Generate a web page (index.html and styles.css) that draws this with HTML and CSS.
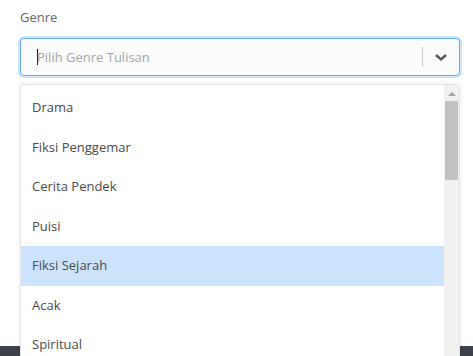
FILE: index.html
```html
<!DOCTYPE html>
<html lang="en">
<head>
  <meta charset="UTF-8">
  <meta name="viewport" content="width=device-width, initial-scale=1.0">
  <title>Genre</title>
  <link rel="stylesheet" href="styles.css">
</head>
<body>
  <main class="content">
    <div class="field">
      <label class="field-label">Genre</label>
      <div class="select">
        <div class="select-control">
          <div class="select-value">
            <span class="caret"></span>
            <span class="placeholder">Pilih Genre Tulisan</span>
          </div>
          <div class="select-indicators">
            <span class="separator"></span>
            <span class="chevron">
              <svg width="14" height="9" viewBox="0 0 14 9"><path d="M2 2 L7 6.5 L12 2" fill="none" stroke="#555" stroke-width="2.4"/></svg>
            </span>
          </div>
        </div>

        <div class="select-menu">
          <ul class="menu-list">
            <li>Drama</li>
            <li>Fiksi Penggemar</li>
            <li>Cerita Pendek</li>
            <li>Puisi</li>
            <li class="focused">Fiksi Sejarah</li>
            <li>Acak</li>
            <li>Spiritual</li>
          </ul>
          <div class="scrollbar">
            <span class="scroll-arrow"></span>
            <span class="scroll-thumb"></span>
          </div>
        </div>
      </div>
    </div>
  </main>
  <footer class="footer"></footer>
</body>
</html>
```

FILE: styles.css
```css
body, html {
  margin: 0;
  padding: 0;
  height: 100%;
  overflow: hidden;
  font-family: "Open Sans", Arial, sans-serif;
  background-color: #fff;
}

body {
  display: flex;
  flex-direction: column;
}

.content {
  height: 346px;
  flex-shrink: 0;
}

.footer {
  flex: 1;
  background-color: #3e434b;
}

.field {
  padding: 7px 13px 0 20px;
}

.field-label {
  display: block;
  font-size: 13px;
  line-height: 20px;
  color: #666;
  margin-bottom: 11px;
}

.select {
  position: relative;
}

.select-control {
  display: flex;
  align-items: center;
  height: 38px;
  box-sizing: border-box;
  background-color: #fafbfb;
  border: 1px solid #66aaf0;
  border-radius: 4px;
  box-shadow: 0 0 0 2px rgba(120, 180, 245, 0.35);
}

.select-value {
  flex: 1;
  display: flex;
  align-items: center;
  padding-left: 16px;
}

.caret {
  display: inline-block;
  width: 1px;
  height: 16px;
  background-color: #222;
  margin-right: -1px;
}

.placeholder {
  font-size: 13px;
  color: #a6a6a6;
}

.select-indicators {
  display: flex;
  align-items: center;
}

.separator {
  width: 1px;
  height: 20px;
  background-color: #ccc;
}

.chevron {
  display: flex;
  justify-content: center;
  align-items: center;
  width: 36px;
}

.select-menu {
  position: absolute;
  top: 46px;
  left: 0;
  right: 0;
  height: 280px;
  display: flex;
  background-color: #fff;
  border: 1px solid #e2e2e2;
  border-bottom: none;
  border-radius: 4px 4px 0 0;
  box-shadow: 0 0 6px rgba(0, 0, 0, 0.08);
  overflow: hidden;
}

.menu-list {
  list-style: none;
  margin: 0;
  padding: 3px 0 0;
  flex: 1;
}

.menu-list li {
  padding: 10px 11px;
  font-size: 13px;
  line-height: 1.5;
  color: #4a4a4a;
}

.menu-list li.focused {
  background-color: #cbe3fb;
}

.scrollbar {
  width: 15px;
  background-color: #f1f1f1;
  display: flex;
  flex-direction: column;
  align-items: center;
}

.scroll-arrow {
  margin-top: 7px;
  width: 0;
  height: 0;
  border-left: 4px solid transparent;
  border-right: 4px solid transparent;
  border-bottom: 4px solid #a3a3a3;
}

.scroll-thumb {
  margin-top: 5px;
  width: 13px;
  height: 79px;
  background-color: #c1c1c1;
}
```
